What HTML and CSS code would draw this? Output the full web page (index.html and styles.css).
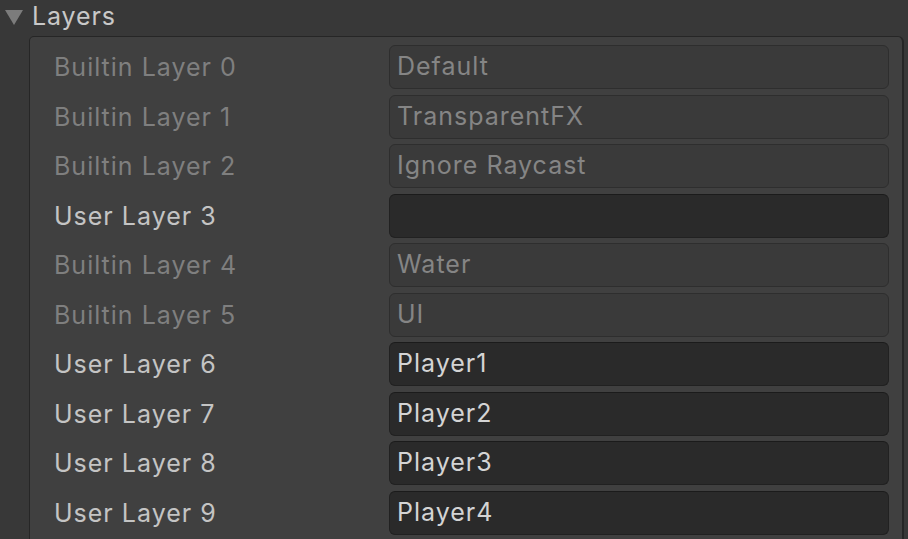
FILE: index.html
```html
<!DOCTYPE html>
<html>
<head>
<meta charset="utf-8">
<link rel="stylesheet" href="styles.css">
</head>
<body>
<div class="header">
  <svg class="foldout" width="18" height="16" viewBox="0 0 18 16"><polygon points="0,1 18,1 9,16" fill="#7c7c7c"/></svg>
  <span class="title">Layers</span>
</div>
<div class="panel">
  <div class="row builtin"><span class="label">Builtin Layer 0</span><div class="field">Default</div></div>
  <div class="row builtin"><span class="label">Builtin Layer 1</span><div class="field">TransparentFX</div></div>
  <div class="row builtin"><span class="label">Builtin Layer 2</span><div class="field">Ignore Raycast</div></div>
  <div class="row user"><span class="label">User Layer 3</span><div class="field"></div></div>
  <div class="row builtin"><span class="label">Builtin Layer 4</span><div class="field">Water</div></div>
  <div class="row builtin"><span class="label">Builtin Layer 5</span><div class="field">UI</div></div>
  <div class="row user"><span class="label">User Layer 6</span><div class="field">Player1</div></div>
  <div class="row user"><span class="label">User Layer 7</span><div class="field">Player2</div></div>
  <div class="row user"><span class="label">User Layer 8</span><div class="field">Player3</div></div>
  <div class="row user"><span class="label">User Layer 9</span><div class="field">Player4</div></div>
</div>
</body>
</html>
```
FILE: styles.css
```css
html, body {
  margin: 0;
  padding: 0;
  background: #383838;
  font-family: Inter, "Noto Sans", sans-serif;
  overflow: hidden;
}
.header {
  height: 36px;
  display: flex;
  align-items: center;
  padding-left: 5px;
  gap: 9px;
}
.foldout {
  display: block;
  margin-top: -2px;
}
.title {
  color: #c8c8c8;
  font-size: 25px;
  letter-spacing: 0.9px;
  line-height: 1;
  margin-top: -3px;
}
.panel {
  margin-left: 29px;
  margin-right: 4px;
  background: #404040;
  border: 1px solid #262626;
  border-right-width: 2px;
  border-radius: 5px 6px 0 0;
  padding-top: 8px;
  padding-left: 24px;
  padding-right: 13px;
}
.row {
  height: 49.5px;
  display: flex;
  align-items: flex-start;
}
.label {
  width: 335px;
  flex: none;
  font-size: 25px;
  letter-spacing: 1px;
  line-height: 44px;
  white-space: nowrap;
}
.field {
  flex: 1;
  height: 44px;
  box-sizing: border-box;
  border-radius: 6px;
  padding-left: 7px;
  font-size: 25px;
  letter-spacing: 1px;
  line-height: 40px;
  white-space: nowrap;
}
.builtin .label { color: #7f7f7f; }
.builtin .field {
  background: #3a3a3a;
  border: 1px solid #2e2e2e;
  color: #858585;
}
.user .label { color: #c4c4c4; }
.user .field {
  background: #2a2a2a;
  border: 1px solid #212121;
  border-top-color: #1b1b1b;
  color: #d4d4d4;
}
```
